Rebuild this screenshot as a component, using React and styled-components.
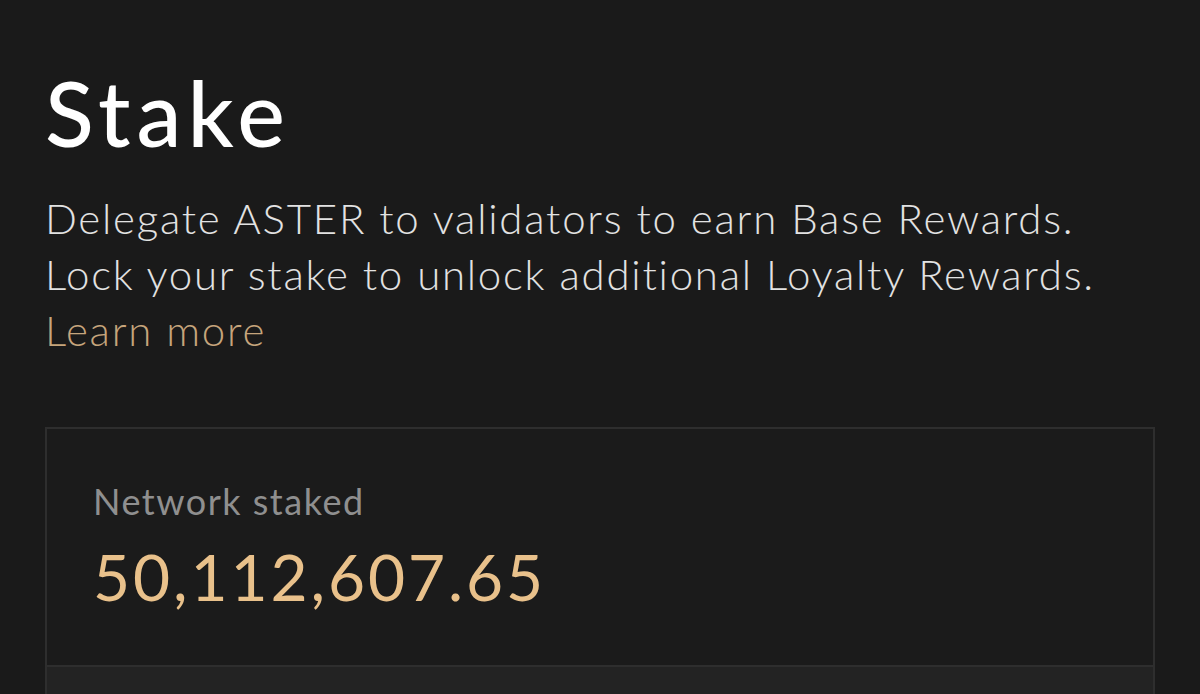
import React from 'react'
import styled, { createGlobalStyle } from 'styled-components'

const GlobalStyle = createGlobalStyle`
  html, body {
    margin: 0;
    padding: 0;
    background: #1a1a1a;
    overflow: hidden;
  }
  body {
    font-family: Lato, "Open Sans", sans-serif;
    -webkit-font-smoothing: antialiased;
  }
`

const Page = styled.main`
  height: 694px;
  padding: 57px 45px 0 45px;
  box-sizing: border-box;
  overflow: hidden;
`

const Title = styled.h1`
  margin: 0;
  font-size: 90px;
  line-height: 110px;
  font-weight: 500;
  letter-spacing: 6px;
  color: #ffffff;
`

const Intro = styled.p`
  margin: 23px 0 0 0;
  font-size: 42px;
  line-height: 56px;
  font-weight: 300;
  letter-spacing: 1.75px;
  color: #e2e2e2;
  white-space: nowrap;
`

const Link = styled.a`
  display: block;
  color: #c6a57c;
  text-decoration: none;
`

const Card = styled.section`
  margin-top: 69px;
  width: 1110px;
  border: 2px solid #2e2e2e;
  background: #1b1b1b;
  box-sizing: border-box;
`

const Stat = styled.div`
  padding: 50px 46px 50px 46px;
  display: flex;
  flex-direction: column;
  gap: 16px;
`

const Label = styled.span`
  font-size: 36px;
  line-height: 44px;
  letter-spacing: 1.5px;
  color: #8f8f8f;
`

const Value = styled.span`
  font-size: 64px;
  line-height: 76px;
  letter-spacing: 2.9px;
  color: #e9c18b;
`

const Footer = styled.div`
  height: 80px;
  border-top: 2px solid #2e2e2e;
  background: #232323;
`

export default function App() {
  return (
    <>
      <GlobalStyle />
      <Page>
        <Title>Stake</Title>
        <Intro>
          Delegate ASTER to validators to earn Base Rewards.
          <br />
          Lock your stake to unlock additional Loyalty Rewards.
          <Link href="#">Learn more</Link>
        </Intro>
        <Card>
          <Stat>
            <Label>Network staked</Label>
            <Value>50,112,607.65</Value>
          </Stat>
          <Footer />
        </Card>
      </Page>
    </>
  )
}
